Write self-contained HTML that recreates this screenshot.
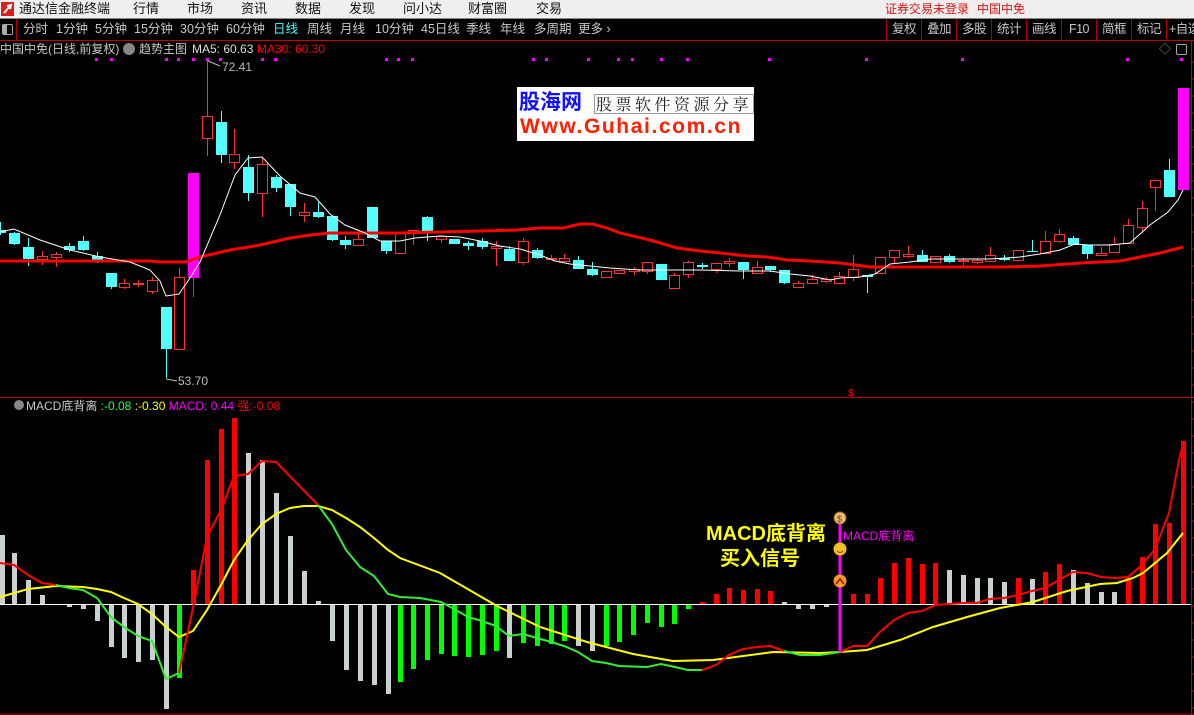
<!DOCTYPE html>
<html><head><meta charset="utf-8"><style>
*{margin:0;padding:0;box-sizing:border-box}
body{width:1194px;height:715px;background:#000;overflow:hidden;position:relative;font-family:"Liberation Sans","Noto Sans CJK SC",sans-serif}
.top{position:absolute;left:0;top:0;width:1194px;height:19px;background:#efefef;border-bottom:1px solid #888}
.top span{position:absolute;top:1px;font-size:13px;color:#111;line-height:16px}
.tb{position:absolute;left:0;top:19px;width:1194px;height:22px;border-bottom:1px solid #c00000}
.tb span{position:absolute;top:3px;font-size:12.5px;color:#c8c8c8;line-height:15px}
.btn{position:absolute;top:0;height:21px;border-left:1px solid #b00000;font-size:12.5px;color:#c8c8c8;text-align:center;line-height:21px;white-space:nowrap;letter-spacing:-0.5px}
.t{position:absolute;font-size:12px;line-height:14px;white-space:nowrap}
</style></head><body>
<div class="top">
<div style="position:absolute;left:1px;top:2px;width:13px;height:14px;background:#d81e1e"></div>
<svg style="position:absolute;left:1px;top:2px" width="13" height="14"><path d="M3 11 L9 4 M6 4 L10 3 L9 7" stroke="#fff" stroke-width="2" fill="none"/></svg>
<span style="left:19px">通达信金融终端</span>
<span style="left:133px">行情</span><span style="left:187px">市场</span><span style="left:241px">资讯</span><span style="left:295px">数据</span><span style="left:349px">发现</span><span style="left:403px">问小达</span><span style="left:468px">财富圈</span><span style="left:536px">交易</span>
<span style="left:885px;color:#e01010;font-size:12px">证券交易未登录</span><span style="left:977px;color:#e01010;font-size:12px">中国中免</span>
</div>
<div class="tb">
<div style="position:absolute;left:2px;top:5px;width:11px;height:11px;border:1px solid #aaa;border-radius:2px"><div style="width:4px;height:9px;background:#aaa"></div></div>
<div style="position:absolute;left:16px;top:0;width:1px;height:21px;background:#b00000"></div>
<span style="left:23px">分时</span><span style="left:56px">1分钟</span><span style="left:95px">5分钟</span><span style="left:134px">15分钟</span><span style="left:180px">30分钟</span><span style="left:226px">60分钟</span><span style="left:273px;color:#4ff">日线</span><span style="left:307px">周线</span><span style="left:340px">月线</span><span style="left:375px">10分钟</span><span style="left:421px">45日线</span><span style="left:466px">季线</span><span style="left:500px">年线</span><span style="left:534px">多周期</span><span style="left:578px">更多 ›</span>
<div class="btn" style="left:886px;width:35px">复权</div><div class="btn" style="left:921px;width:35px">叠加</div><div class="btn" style="left:956px;width:35px">多股</div><div class="btn" style="left:991px;width:35px">统计</div><div class="btn" style="left:1026px;width:35px">画线</div><div class="btn" style="left:1061px;width:35px">F10</div><div class="btn" style="left:1096px;width:35px">简框</div><div class="btn" style="left:1131px;width:35px">标记</div><div class="btn" style="left:1166px;width:28px;text-align:left;padding-left:2px">+自选</div>
</div>
<div class="t" style="left:0;top:42px;color:#c8c8c8">中国中免(日线,前复权)</div>
<div style="position:absolute;left:123px;top:43px;width:12px;height:12px;border-radius:6px;background:#888"></div>
<div class="t" style="left:139px;top:42px;color:#c8c8c8">趋势主图</div>
<div class="t" style="left:192px;top:42px;color:#ddd">MA5: 60.63</div>
<div class="t" style="left:257px;top:42px;color:#f00">MA30: 60.30</div>
<div class="t" style="left:1159px;top:42px;color:#888">◇</div>
<div style="position:absolute;left:1176px;top:44px;width:11px;height:11px;border:1px solid #aaa;border-radius:2px"></div>
<div style="position:absolute;left:517px;top:87px;width:237px;height:54px;background:#fff"></div>
<div class="t" style="left:519px;top:91px;font-size:21px;line-height:24px;font-weight:bold;color:#1010ff">股海网</div>
<div class="t" style="left:594px;top:94px;font-size:16px;line-height:18px;color:#222;border:1px solid #999;padding:0 1px;letter-spacing:3.5px;font-family:'Noto Serif CJK SC',serif">股票软件资源分享</div>
<div class="t" style="left:520px;top:116px;font-size:21px;line-height:22px;font-weight:bold;color:#ff2000;letter-spacing:1.6px">Www.Guhai.com.cn</div>
<div class="t" style="left:14px;top:399px;color:#c8c8c8"><span style="display:inline-block;width:10px;height:10px;border-radius:5px;background:#888;margin-right:2px"></span>MACD底背离 <span style="color:#3f3">:-0.08</span> <span style="color:#ff0">:-0.30</span> <span style="color:#f0f">MACD: 0.44</span> <span style="color:#f00">强:-0.08</span></div>
<div class="t" style="left:706px;top:521px;font-size:20px;line-height:26px;color:#ff0;font-weight:bold">MACD底背离</div>
<div class="t" style="left:720px;top:546px;font-size:20px;line-height:26px;color:#ff0;font-weight:bold">买入信号</div>
<div class="t" style="left:843px;top:529px;color:#f0f">MACD底背离</div>
<svg id="c" style="position:absolute;left:0;top:0" width="1194" height="715"></svg>
<script>
var s='';
function L(x1,y1,x2,y2,c,w){s+='<line x1="'+x1+'" y1="'+y1+'" x2="'+x2+'" y2="'+y2+'" stroke="'+c+'" stroke-width="'+(w||1)+'"/>';}
function P(pts,c,w){var d='';for(var i=0;i<pts.length;i+=2)d+=(i?' ':'')+pts[i]+','+pts[i+1];s+='<polyline points="'+d+'" fill="none" stroke="'+c+'" stroke-width="'+w+'"/>';}
L(0,397.5,1194,397.5,'#c00000',1);L(0,714,1194,714,'#c00000',1);L(1191.5,41,1191.5,715,'#c00000',1);
for(var y=62;y<715;y+=17)L(1191,y,1194,y,'#c00000',1);
[96,111,166,178,193,207,220,262,275,386,398,412,533,546,588,618,632,661,687,769,866,962,1127,1181].forEach(function(x){s+='<rect x="'+(x-1)+'" y="58" width="3" height="3" fill="#f0f"/>';});
var K=[['c',0,230,233,222,235],['c',14,233,244,232,245],['c',28,247,259,238,266],['r',42,256,259,251,265],['r',56,254,257,252,267],['c',69,246,250,243,252],['c',83,241,250,236,251],['c',97,256,262,252,263],['c',111,273,287,273,289],['r',124,283,287,279,289],['r',138,283,284,280,287],['r',152,280,291,277,294],['c',166,307,349,307,378],['r',179,277,349,268,349],['m',193,173,278,173,297],['r',207,116,138,60,156],['c',221,122,155,111,163],['r',234,154,162,129,169],['c',248,167,193,155,201],['r',262,164,193,158,217],['c',276,177,188,175,192],['c',290,184,207,184,216],['r',304,212,215,203,222],['c',318,212,217,202,218],['c',332,216,240,216,241],['c',345,240,245,236,249],['r',358,239,245,234,245],['c',372,207,238,207,238],['c',386,241,251,241,254],['r',400,233,253,233,253],['r',413,230,232,230,245],['c',427,217,232,216,241],['r',441,236,239,236,243],['c',454,239,244,239,244],['c',468,243,246,241,250],['c',482,241,247,238,249],['r',496,246,248,241,266],['c',509,249,261,246,261],['r',523,241,262,238,265],['c',537,250,258,248,259],['r',551,258,259,255,260],['r',564,258,261,254,261],['c',578,260,269,256,269],['c',592,269,275,262,276],['r',606,271,277,271,278],['r',619,270,273,270,273],['r',634,269,271,267,275],['r',647,262,271,262,274],['c',661,264,280,264,280],['r',674,275,288,273,288],['r',688,262,274,261,278],['c',702,265,267,263,269],['r',716,263,269,263,273],['r',729,261,263,258,267],['c',743,262,270,262,279],['r',757,267,273,261,273],['c',770,266,270,266,272],['c',784,270,283,270,284],['r',798,283,287,281,288],['r',812,279,283,275,283],['r',826,279,281,277,283],['r',839,276,283,272,283],['r',853,269,277,255,281],['c',867,275,277,275,293],['r',880,257,273,257,273],['r',894,250,257,250,263],['r',908,254,256,246,258],['c',922,255,262,250,262],['r',935,256,262,256,262],['c',949,256,262,254,263],['r',963,260,261,258,266],['r',977,260,262,258,264],['r',990,255,261,247,261],['c',1004,258,260,255,261],['r',1018,250,260,250,261],['c',1032,251,252,240,252],['r',1045,241,253,231,253],['r',1059,234,241,229,243],['c',1073,238,245,236,245],['c',1087,245,254,245,259],['r',1101,253,255,247,255],['r',1114,244,252,237,252],['r',1128,225,243,219,243],['r',1142,208,227,201,231],['r',1155,180,187,180,211],['c',1169,170,197,159,197],['m',1183,88,190,88,190]];
K.forEach(function(k){var x=k[1],c=k[0]=='c'?'#54ffff':k[0]=='m'?'#ff00ff':'#ff3030';
L(x+0.5,k[4],x+0.5,k[5],c,1);
if(k[0]=='r'){s+='<rect x="'+(x-4.5)+'" y="'+(k[2]+0.5)+'" width="10" height="'+Math.max(1,k[3]-k[2])+'" fill="#000" stroke="'+c+'" stroke-width="1"/>';}
else s+='<rect x="'+(x-5)+'" y="'+k[2]+'" width="11" height="'+Math.max(1,k[3]-k[2])+'" fill="'+c+'"/>';});
P([0,261,150,261,160,262,185,262,200,257,230,250,260,245,290,238,310,235,330,233,400,233,517,230,540,228,563,228,580,224,592,224,607,228,620,233,650,240,677,248,700,251,720,253,747,256,767,257,787,260,810,261,840,263,870,267,1000,267,1040,266,1080,263,1120,261,1140,257,1160,253,1183,247],'#ff0000',3);
P([0,232,14,229,40,240,70,250,100,257,130,262,150,270,160,281,166,296,179,294,190,278,200,262,220,215,235,175,248,158,262,157,280,176,300,193,315,197,330,214,345,225,365,233,380,241,400,241,415,238,427,237,440,236,460,237,480,241,500,246,520,249,540,255,555,261,570,264,590,266,610,268,640,270,700,270,740,271,770,271,790,274,810,276,830,280,840,278,860,277,875,274,890,264,910,262,930,259,990,259,1020,257,1040,254,1060,250,1075,244,1090,245,1110,245,1130,243,1150,225,1168,212,1178,200,1183,190],'#fff',1);
s+='<text x="222" y="71" fill="#bbb" font-size="12" font-family="Liberation Sans">72.41</text>';L(208,61,220,66,'#bbb',1);
s+='<text x="178" y="385" fill="#bbb" font-size="12" font-family="Liberation Sans">53.70</text>';L(166,379,177,381,'#bbb',1);
s+='<text x="848" y="396" fill="#f00" font-size="10" font-family="Liberation Sans">$</text>';
var Z=604;
var B=[['g',2,535],['g',14,553],['g',28,580],['g',42,595],['g',69,607],['g',83,609],['g',97,621],['g',111,647],['g',124,658],['g',138,662],['g',152,660],['g',166,709],['G',179,678],['r',193,570],['r',207,460],['r',221,429],['r',234,418],['g',248,453],['g',262,460],['g',276,493],['g',290,536],['g',304,571],['g',318,601],['g',332,641],['g',346,670],['g',360,681],['g',374,685],['g',388,694],['G',400,682],['G',413,669],['G',427,660],['G',441,654],['G',454,656],['G',468,657],['G',482,655],['G',496,651],['g',509,658],['G',523,643],['G',537,646],['G',551,644],['G',564,641],['g',578,646],['g',592,651],['G',606,646],['G',619,642],['G',633,635],['G',647,623],['G',661,627],['G',674,624],['G',688,609],['r',702,602],['r',716,594],['r',729,588],['r',743,590],['r',757,589],['r',770,591],['g',784,602],['g',798,609],['g',812,609],['g',826,607],['r',853,594],['r',867,594],['r',880,578],['r',894,563],['r',908,558],['r',922,564],['r',935,563],['g',949,570],['g',963,575],['g',977,578],['g',990,578],['g',1004,582],['r',1018,578],['g',1032,579],['r',1045,572],['r',1059,564],['g',1073,570],['g',1087,583],['g',1101,592],['g',1114,592],['r',1128,577],['r',1142,557],['r',1155,524],['r',1169,523],['r',1183,441]];
B.forEach(function(b){var c=b[0]=='r'?'#ff0000':b[0]=='G'?'#00ff00':'#c8d0d0';var y1=Math.min(Z,b[2]),h=Math.abs(Z-b[2]);s+='<rect x="'+(b[1]-2)+'" y="'+y1+'" width="5" height="'+Math.max(1,h)+'" fill="'+c+'"/>';});
L(0,604.5,1191,604.5,'#fff',1);
P([0,597,28,589,56,586,83,587,97,589,111,592,124,598,138,604,152,614,166,627,179,637,193,631,207,610,221,585,234,560,248,540,262,524,276,514,290,508,304,506,318,506,332,510,346,518,360,527,374,538,388,550,400,558,440,573,497,606,540,627,587,642,633,654,673,661,713,660,773,652,820,653,840,652,867,650,900,640,933,627,967,617,1000,608,1033,602,1067,591,1100,584,1117,583,1133,578,1143,573,1167,553,1183,533],'#ffff00',2);
P([0,563,14,565,28,575,42,583,56,585],'#ff0000',2);
P([56,585,69,588,83,590,97,598,111,617,124,627,138,636,152,641,166,679,179,673],'#33ee33',2);
P([179,673,193,608,207,537,221,510,234,476,248,474,262,461,276,462,318,505],'#ff0000',2);
P([318,505,332,524,346,550,360,567,374,576,388,594,400,597,420,598,441,602,454,609,468,617,482,621,496,626,509,636,523,634,537,638,551,642,564,646,578,652,592,661,606,663,619,666,647,667,661,664,675,667,688,670,702,670],'#33ee33',2);
P([702,670,716,665,729,655,743,649,757,647,770,646,784,651],'#ff0000',2);
P([784,651,800,655,820,655,840,652],'#33ee33',2);
P([840,652,853,646,867,646,880,632,894,620,908,613,922,611,935,605,949,604,963,603,977,603,990,599,1004,598,1018,595,1032,591,1045,588,1059,580,1073,572,1087,573,1101,577,1114,578,1128,577,1142,565,1155,549,1169,513,1179,460,1183,445],'#ff0000',2);
L(840,512,840,652,'#ff00ff',3);
s+='<circle cx="840" cy="518" r="6" fill="#e8c070" stroke="#a06020"/><text x="837" y="522" fill="#a02020" font-size="9" font-family="Liberation Sans">$</text>';
s+='<circle cx="840" cy="549" r="6.5" fill="#f0c020"/><path d="M837 551 Q840 554 843 551" stroke="#804000" fill="none"/>';
s+='<circle cx="840" cy="581" r="6.5" fill="#f0a020"/><path d="M836 584 L840 579 L844 584" stroke="#c02000" stroke-width="2" fill="none"/>';
document.getElementById('c').innerHTML=s;
</script>
</body></html>
